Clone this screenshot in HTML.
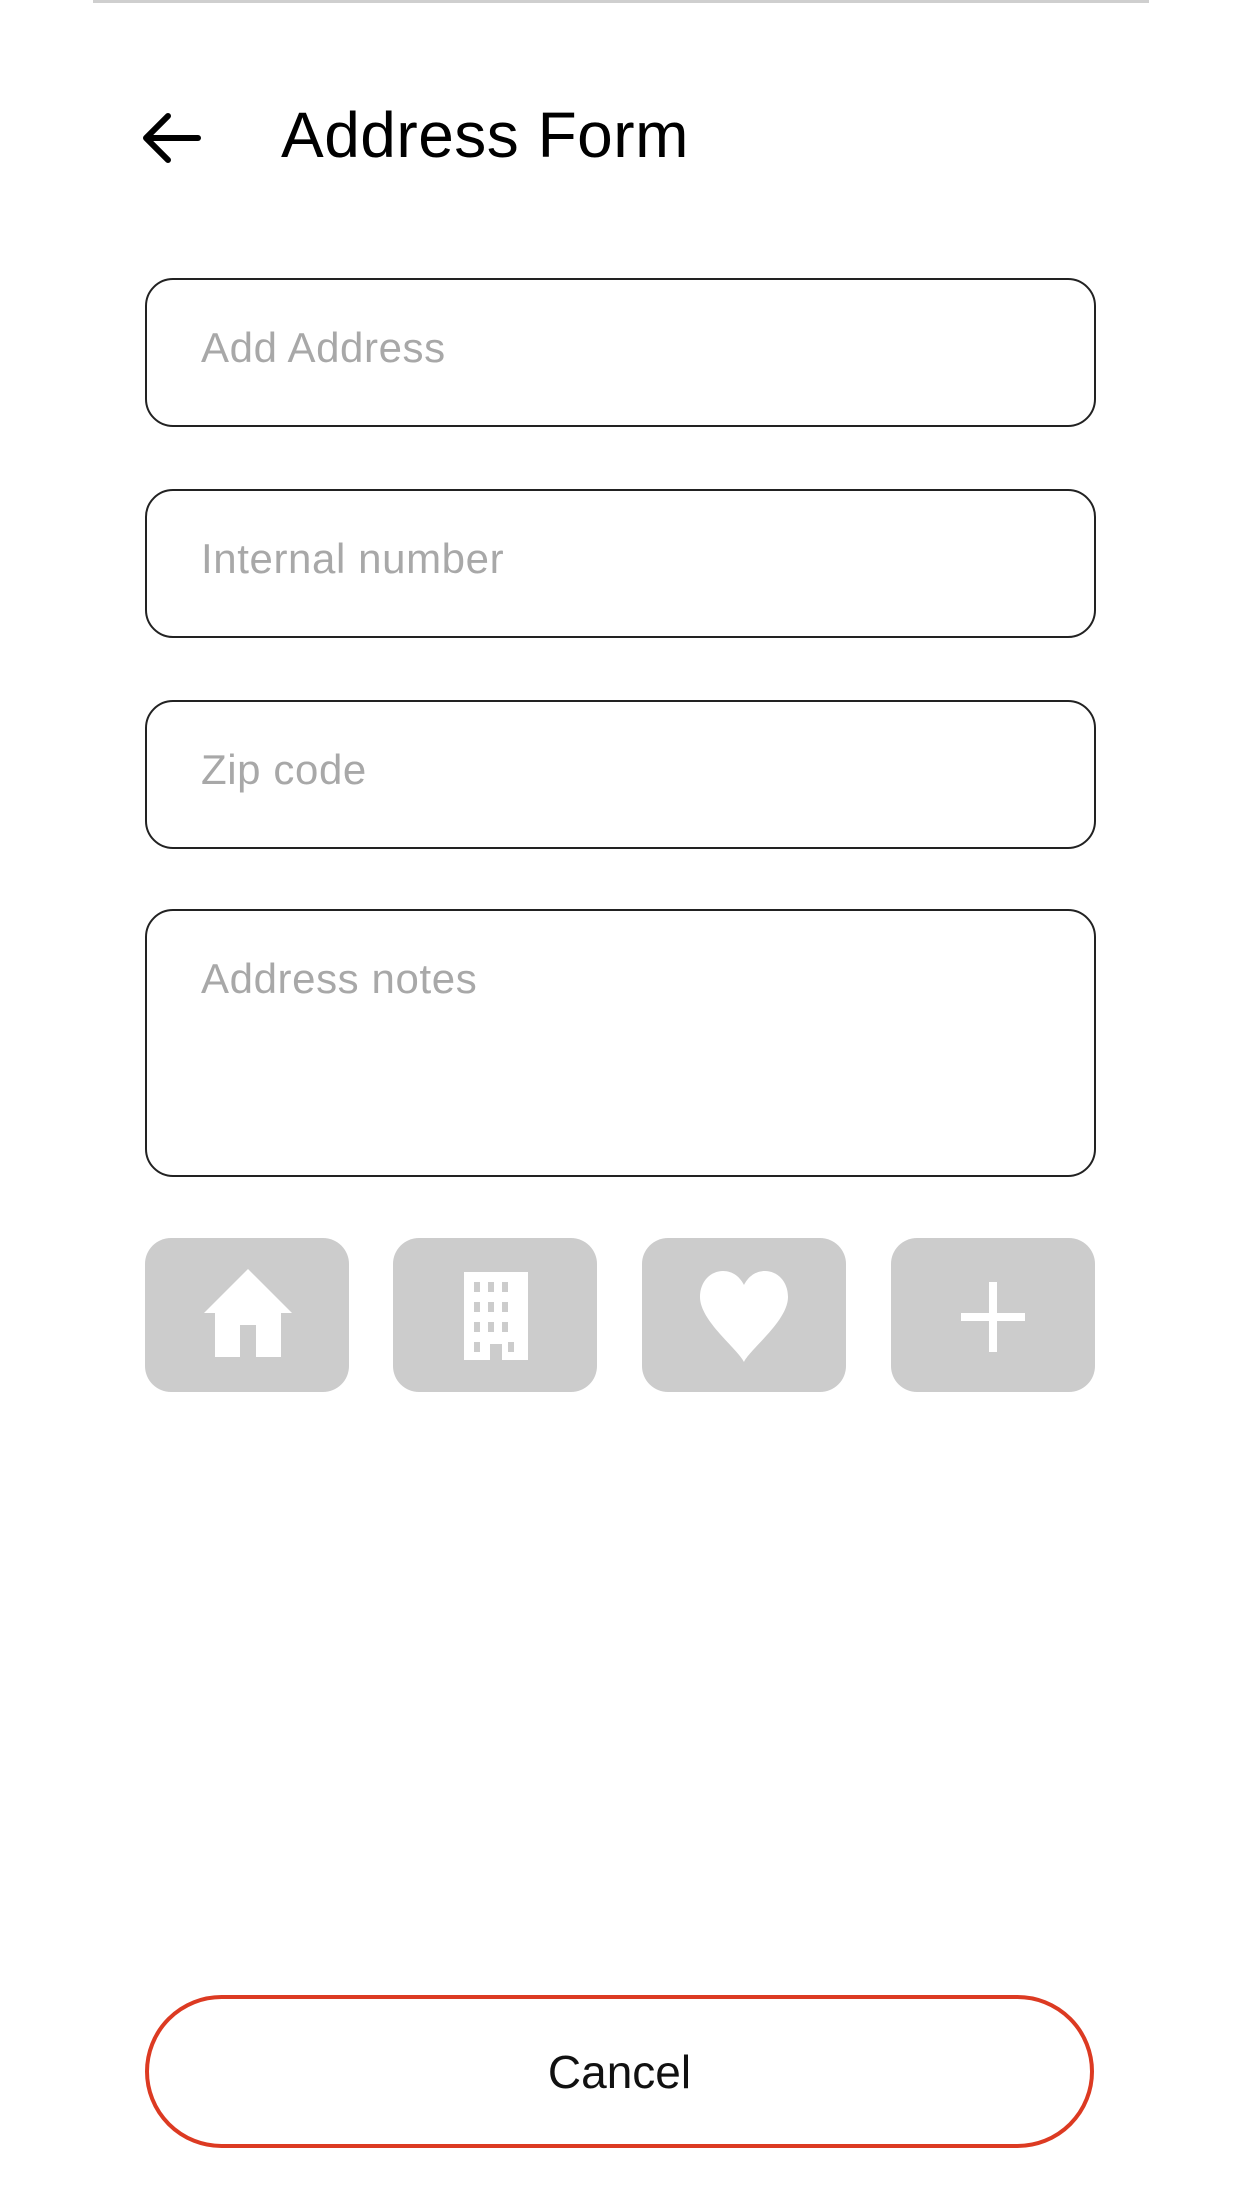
<!DOCTYPE html>
<html><head><meta charset="utf-8"><style>
html,body{margin:0;padding:0;background:#fff;}
body{width:1242px;height:2206px;position:relative;overflow:hidden;font-family:"Liberation Sans",sans-serif;}
.a{position:absolute;}
.f{position:absolute;left:145px;width:951px;border:2px solid #222;border-radius:28px;box-sizing:border-box;}
.ph{position:absolute;left:54px;top:44px;font-size:42px;letter-spacing:0.6px;color:#a8a8a8;}
.b{position:absolute;top:1238px;width:204px;height:154px;background:#cccccc;border-radius:26px;}
</style></head><body>
<div class="a" style="left:93px;top:0;width:1056px;height:3px;background:#cfcfcf"></div>
<svg class="a" style="left:140px;top:110px" width="62" height="56" viewBox="0 0 62 56"><path d="M58 28H8M28 6L6 28L28 50" fill="none" stroke="#000" stroke-width="6" stroke-linecap="round" stroke-linejoin="round"/></svg>
<div class="a" style="left:281px;top:95px;font-size:64px;letter-spacing:0.5px;color:#000;line-height:80px">Address Form</div>
<div class="f" style="top:278px;height:149px"><div class="ph">Add Address</div></div>
<div class="f" style="top:489px;height:149px"><div class="ph">Internal number</div></div>
<div class="f" style="top:700px;height:149px"><div class="ph">Zip code</div></div>
<div class="f" style="top:909px;height:268px"><div class="ph">Address notes</div></div>
<div class="b" style="left:145px"><svg class="a" style="left:59px;top:31px" width="88" height="88" viewBox="0 0 88 88"><path d="M44 0L88 44H77V88H52V56H36V88H11V44H0Z" fill="#fff"/></svg></div>
<div class="b" style="left:393px"><svg class="a" style="left:71px;top:34px" width="64" height="88" viewBox="0 0 64 88" fill="#fff"><path fill-rule="evenodd" d="M0 0H64V88H38V72H26V88H0Z M10 10v10h6V10z M24 10v10h6V10z M38 10v10h6V10z M10 30v10h6V30z M24 30v10h6V30z M38 30v10h6V30z M10 50v10h6V50z M24 50v10h6V50z M38 50v10h6V50z M10 70v10h6V70z M44 70v10h6V70z"/></svg></div>
<div class="b" style="left:642px"><svg class="a" style="left:56px;top:31px" width="92" height="93" viewBox="0 0 92 93"><path d="M46 93C40 80 2 52 2 28C2 12 13 2 25 2C35 2 42 8 46 16C50 8 57 2 67 2C79 2 90 12 90 28C90 52 52 80 46 93Z" fill="#fff"/></svg></div>
<div class="b" style="left:891px"><svg class="a" style="left:70px;top:44px" width="64" height="70" viewBox="0 0 64 70"><path d="M32 0V70M0 35H64" stroke="#fff" stroke-width="8"/></svg></div>
<div class="a" style="left:145px;top:1995px;width:949px;height:153px;border:4px solid #dc3a22;border-radius:77px;box-sizing:border-box;display:flex;align-items:center;justify-content:center;font-size:46px;color:#111">Cancel</div>
</body></html>
